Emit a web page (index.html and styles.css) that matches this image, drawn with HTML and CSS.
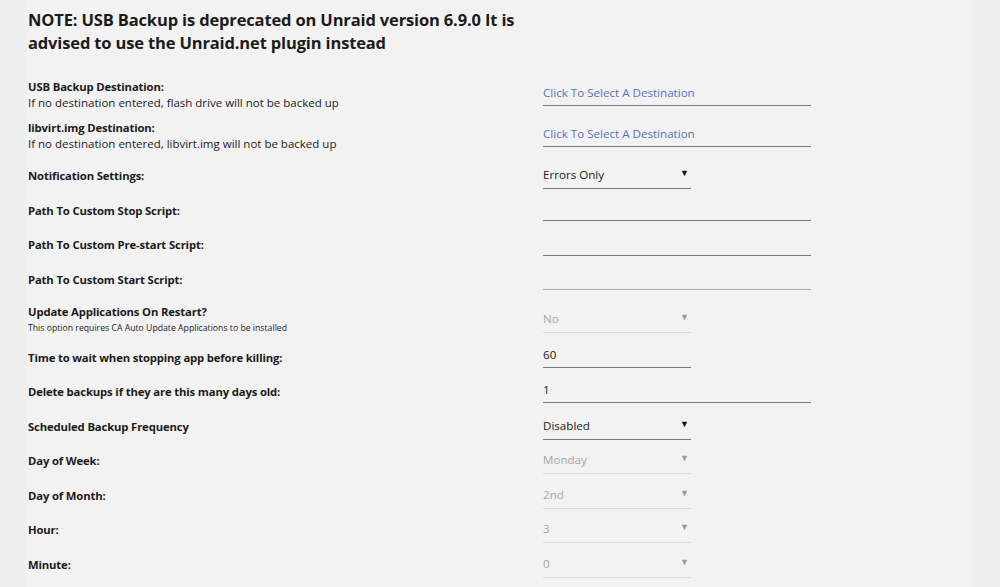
FILE: index.html
```html
<!DOCTYPE html>
<html lang="en">
<head>
    <meta charset="UTF-8">
    <title>CA Backup / Restore Appdata</title>
    <link rel="stylesheet" href="styles.css">
</head>
<body>
    <div class="panel">
        <h2 class="notice">NOTE: USB Backup is deprecated on Unraid version 6.9.0 It is advised to use the Unraid.net plugin instead</h2>

        <div class="settings">
            <div class="row tall">
                <div class="label">
                    <b>USB Backup Destination:</b>
                    <span class="desc">If no destination entered, flash drive will not be backed up</span>
                </div>
                <div class="field"><input type="text" class="text long picker" placeholder="Click To Select A Destination"></div>
            </div>

            <div class="row tall">
                <div class="label">
                    <b>libvirt.img Destination:</b>
                    <span class="desc">If no destination entered, libvirt.img will not be backed up</span>
                </div>
                <div class="field"><input type="text" class="text long picker" placeholder="Click To Select A Destination"></div>
            </div>

            <div class="row spaced">
                <div class="label"><b>Notification Settings:</b></div>
                <div class="field">
                    <span class="select">
                        <select><option>Errors Only</option></select>
                    </span>
                </div>
            </div>

            <div class="row">
                <div class="label"><b>Path To Custom Stop Script:</b></div>
                <div class="field"><input type="text" class="text long"></div>
            </div>

            <div class="row">
                <div class="label"><b>Path To Custom Pre-start Script:</b></div>
                <div class="field"><input type="text" class="text long"></div>
            </div>

            <div class="row">
                <div class="label"><b>Path To Custom Start Script:</b></div>
                <div class="field"><input type="text" class="text long hover"></div>
            </div>

            <div class="row tall spaced">
                <div class="label">
                    <b>Update Applications On Restart?</b>
                    <span class="desc small">This option requires CA Auto Update Applications to be installed</span>
                </div>
                <div class="field">
                    <span class="select disabled">
                        <select disabled><option>No</option></select>
                    </span>
                </div>
            </div>

            <div class="row">
                <div class="label"><b>Time to wait when stopping app before killing:</b></div>
                <div class="field"><input type="text" class="text short" value="60"></div>
            </div>

            <div class="row">
                <div class="label"><b>Delete backups if they are this many days old:</b></div>
                <div class="field"><input type="text" class="text long" value="1"></div>
            </div>

            <div class="row">
                <div class="label"><b>Scheduled Backup Frequency</b></div>
                <div class="field">
                    <span class="select">
                        <select><option>Disabled</option></select>
                    </span>
                </div>
            </div>

            <div class="row">
                <div class="label"><b>Day of Week:</b></div>
                <div class="field">
                    <span class="select disabled">
                        <select disabled><option>Monday</option></select>
                    </span>
                </div>
            </div>

            <div class="row">
                <div class="label"><b>Day of Month:</b></div>
                <div class="field">
                    <span class="select disabled">
                        <select disabled><option>2nd</option></select>
                    </span>
                </div>
            </div>

            <div class="row">
                <div class="label"><b>Hour:</b></div>
                <div class="field">
                    <span class="select disabled">
                        <select disabled><option>3</option></select>
                    </span>
                </div>
            </div>

            <div class="row">
                <div class="label"><b>Minute:</b></div>
                <div class="field">
                    <span class="select disabled">
                        <select disabled><option>0</option></select>
                    </span>
                </div>
            </div>
        </div>
    </div>
</body>
</html>
```

FILE: styles.css
```css
body {
    margin: 0;
    background-color: #efefef;
    font-family: "Open Sans", "Noto Sans", sans-serif;
    color: #1c1b1b;
}
.panel {
    background-color: #f2f2f2;
    margin: 0 28px 0 27px;
    min-height: 100vh;
    overflow: hidden;
}
.notice {
    font-size: 16.5px;
    font-weight: 700;
    line-height: 23px;
    letter-spacing: -0.15px;
    margin: 8px 0 0 1px;
    width: 500px;
}
.settings {
    margin-top: 20px;
}
.row {
    display: grid;
    grid-template-columns: 516px 1fr;
    align-items: center;
    height: 34.5px;
}
.row.tall { height: 41px; }
.row.spaced { margin-top: 2.5px; }
.label {
    font-size: 11.3px;
    line-height: 15px;
    padding-left: 1px;
}
.label b {
    display: block;
    font-weight: 700;
    letter-spacing: -0.15px;
}
.desc {
    display: block;
    margin-top: 1px;
    font-size: 11.5px;
}
.desc.small {
    font-size: 8.7px;
    margin-top: 2px;
}
.field {
    display: flex;
    align-items: center;
}
.text {
    font-family: inherit;
    font-size: 11.6px;
    color: #1c1b1b;
    background: transparent;
    border: none;
    border-bottom: 1px solid #7b7b7b;
    padding: 0 0 4px 0;
    height: 22px;
    box-sizing: border-box;
    outline: none;
}
.text.long { width: 268px; }
.text.short { width: 148px; }
.text.hover { border-bottom-color: #ababab; }
.picker::placeholder { color: #5472c2; }
.select {
    position: relative;
    display: inline-block;
    width: 148px;
}
.select select {
    appearance: none;
    -webkit-appearance: none;
    font-family: inherit;
    font-size: 11.6px;
    color: #1c1b1b;
    background: transparent;
    border: none;
    border-bottom: 1px solid #7b7b7b;
    padding: 0 0 4px 0;
    height: 24px;
    width: 100%;
    outline: none;
    opacity: 1;
}
.select::after {
    content: "\25BC";
    position: absolute;
    right: 2px;
    top: 4px;
    font-size: 9px;
    color: #111;
    pointer-events: none;
}
.select.disabled select {
    color: #a6a6a6;
    border-bottom-color: #dcdcdc;
}
.select.disabled::after { color: #9a9a9a; }
```
